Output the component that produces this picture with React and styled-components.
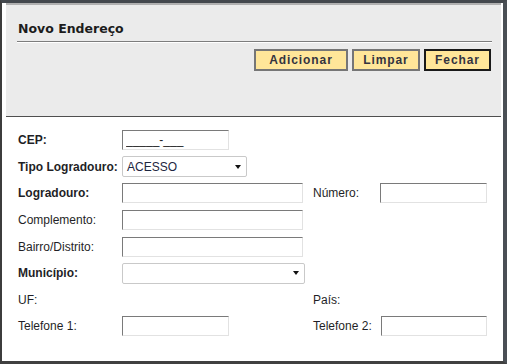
import styled, { createGlobalStyle } from 'styled-components';

const GlobalStyle = createGlobalStyle`
  body {
    margin: 0;
    background: #fff;
    font-family: "Liberation Sans", Arial, sans-serif;
  }
`;

const App = () => {
  return (
    <>
      <GlobalStyle />
      <Window>
        <Header>
          <Title>Novo Endereço</Title>
          <Rule />
          <Actions>
            <Button $w={94}>Adicionar</Button>
            <Button $w={68}>Limpar</Button>
            <Button $w={67} $primary>Fechar</Button>
          </Actions>
        </Header>
        <Form>
          <Label $bold>CEP:</Label>
          <Field $w={107} defaultValue='_____-___' />
          <Empty />
          <Empty />

          <Label $bold>Tipo Logradouro:</Label>
          <Select $w={125}>
            <span>ACESSO</span>
            <Arrow />
          </Select>
          <Empty />
          <Empty />

          <Label $bold>Logradouro:</Label>
          <Field $w={181} />
          <Label>Número:</Label>
          <Field $w={107} />

          <Label>Complemento:</Label>
          <Field $w={181} />
          <Empty />
          <Empty />

          <Label>Bairro/Distrito:</Label>
          <Field $w={181} />
          <Empty />
          <Empty />

          <Label $bold>Município:</Label>
          <Select $w={183}>
            <span></span>
            <Arrow />
          </Select>
          <Empty />
          <Empty />

          <Label>UF:</Label>
          <Empty />
          <Label>País:</Label>
          <Empty />

          <Label>Telefone 1:</Label>
          <Field $w={107} />
          <Label>Telefone 2:</Label>
          <Field $w={106} $shift={1} />
        </Form>
      </Window>
    </>
  );
};

export default App;

const Window = styled.div`
  width: 507px;
  height: 364px;
  box-sizing: border-box;
  border-style: solid;
  border-width: 3px 4px 3px 2px;
  border-color: #43484d #4a4f55 #404040 #3c3c3c;
  padding: 0 2px 0 4px;
  background: #fff;
  display: flex;
  flex-direction: column;
`;
const Header = styled.div`
  height: 114px;
  box-sizing: border-box;
  background: #ebebeb;
  border-top: 2px solid #b0b0b0;
  border-bottom: 1px solid #4f4f4f;
  padding: 16px 9px 0 11px;
`;
const Title = styled.div`
  font-family: "DejaVu Sans", Verdana, sans-serif;
  font-weight: 700;
  font-size: 12.5px;
  line-height: 15px;
  color: #1c1c1c;
  padding-left: 1px;
`;
const Rule = styled.div`
  margin-top: 5px;
  height: 1px;
  background: #7d7d7d;
  border-bottom: 1px solid #fff;
`;
const Actions = styled.div`
  display: flex;
  justify-content: flex-end;
  gap: 4px;
  margin-top: 6px;
  padding-right: 1px;
`;
const Button = styled.button`
  width: ${(p) => p.$w}px;
  height: 22px;
  box-sizing: border-box;
  padding: 0;
  background: #ffe699;
  border: 2px solid ${(p) => (p.$primary ? '#1a1a1a' : '#767676')};
  font-family: "Liberation Sans", Arial, sans-serif;
  font-weight: 700;
  font-size: 12px;
  letter-spacing: 0.9px;
  color: #33333f;
  cursor: pointer;
`;
const Form = styled.div`
  flex: 1;
  padding: 10px 0 0 12px;
  display: grid;
  grid-template-columns: 104px 191px 67px 107px;
  grid-auto-rows: 26.6px;
  align-items: center;
`;
const Label = styled.span`
  font-size: 12px;
  font-weight: ${(p) => (p.$bold ? 700 : 400)};
  color: #1f1f27;
  white-space: nowrap;
`;
const Empty = styled.span``;
const Field = styled.input`
  width: ${(p) => p.$w}px;
  height: 20px;
  box-sizing: border-box;
  margin: 0 0 0 ${(p) => p.$shift || 0}px;
  padding: 0 3px;
  border: 1px solid;
  border-color: #7a7a7a #e2e2e2 #e2e2e2 #7a7a7a;
  background: #fff;
  font-family: "Liberation Sans", Arial, sans-serif;
  font-size: 12px;
  color: #222;
  outline: none;
`;
const Select = styled.div`
  width: ${(p) => p.$w}px;
  height: 21px;
  box-sizing: border-box;
  border: 1px solid #c9c9c9;
  border-radius: 2px;
  background: #fff;
  display: flex;
  align-items: center;
  justify-content: space-between;
  padding: 0 5px 0 4px;
  font-size: 12px;
  color: #1d2640;
`;
const Arrow = styled.span`
  width: 0;
  height: 0;
  border-left: 3.5px solid transparent;
  border-right: 3.5px solid transparent;
  border-top: 4px solid #111;
`;
